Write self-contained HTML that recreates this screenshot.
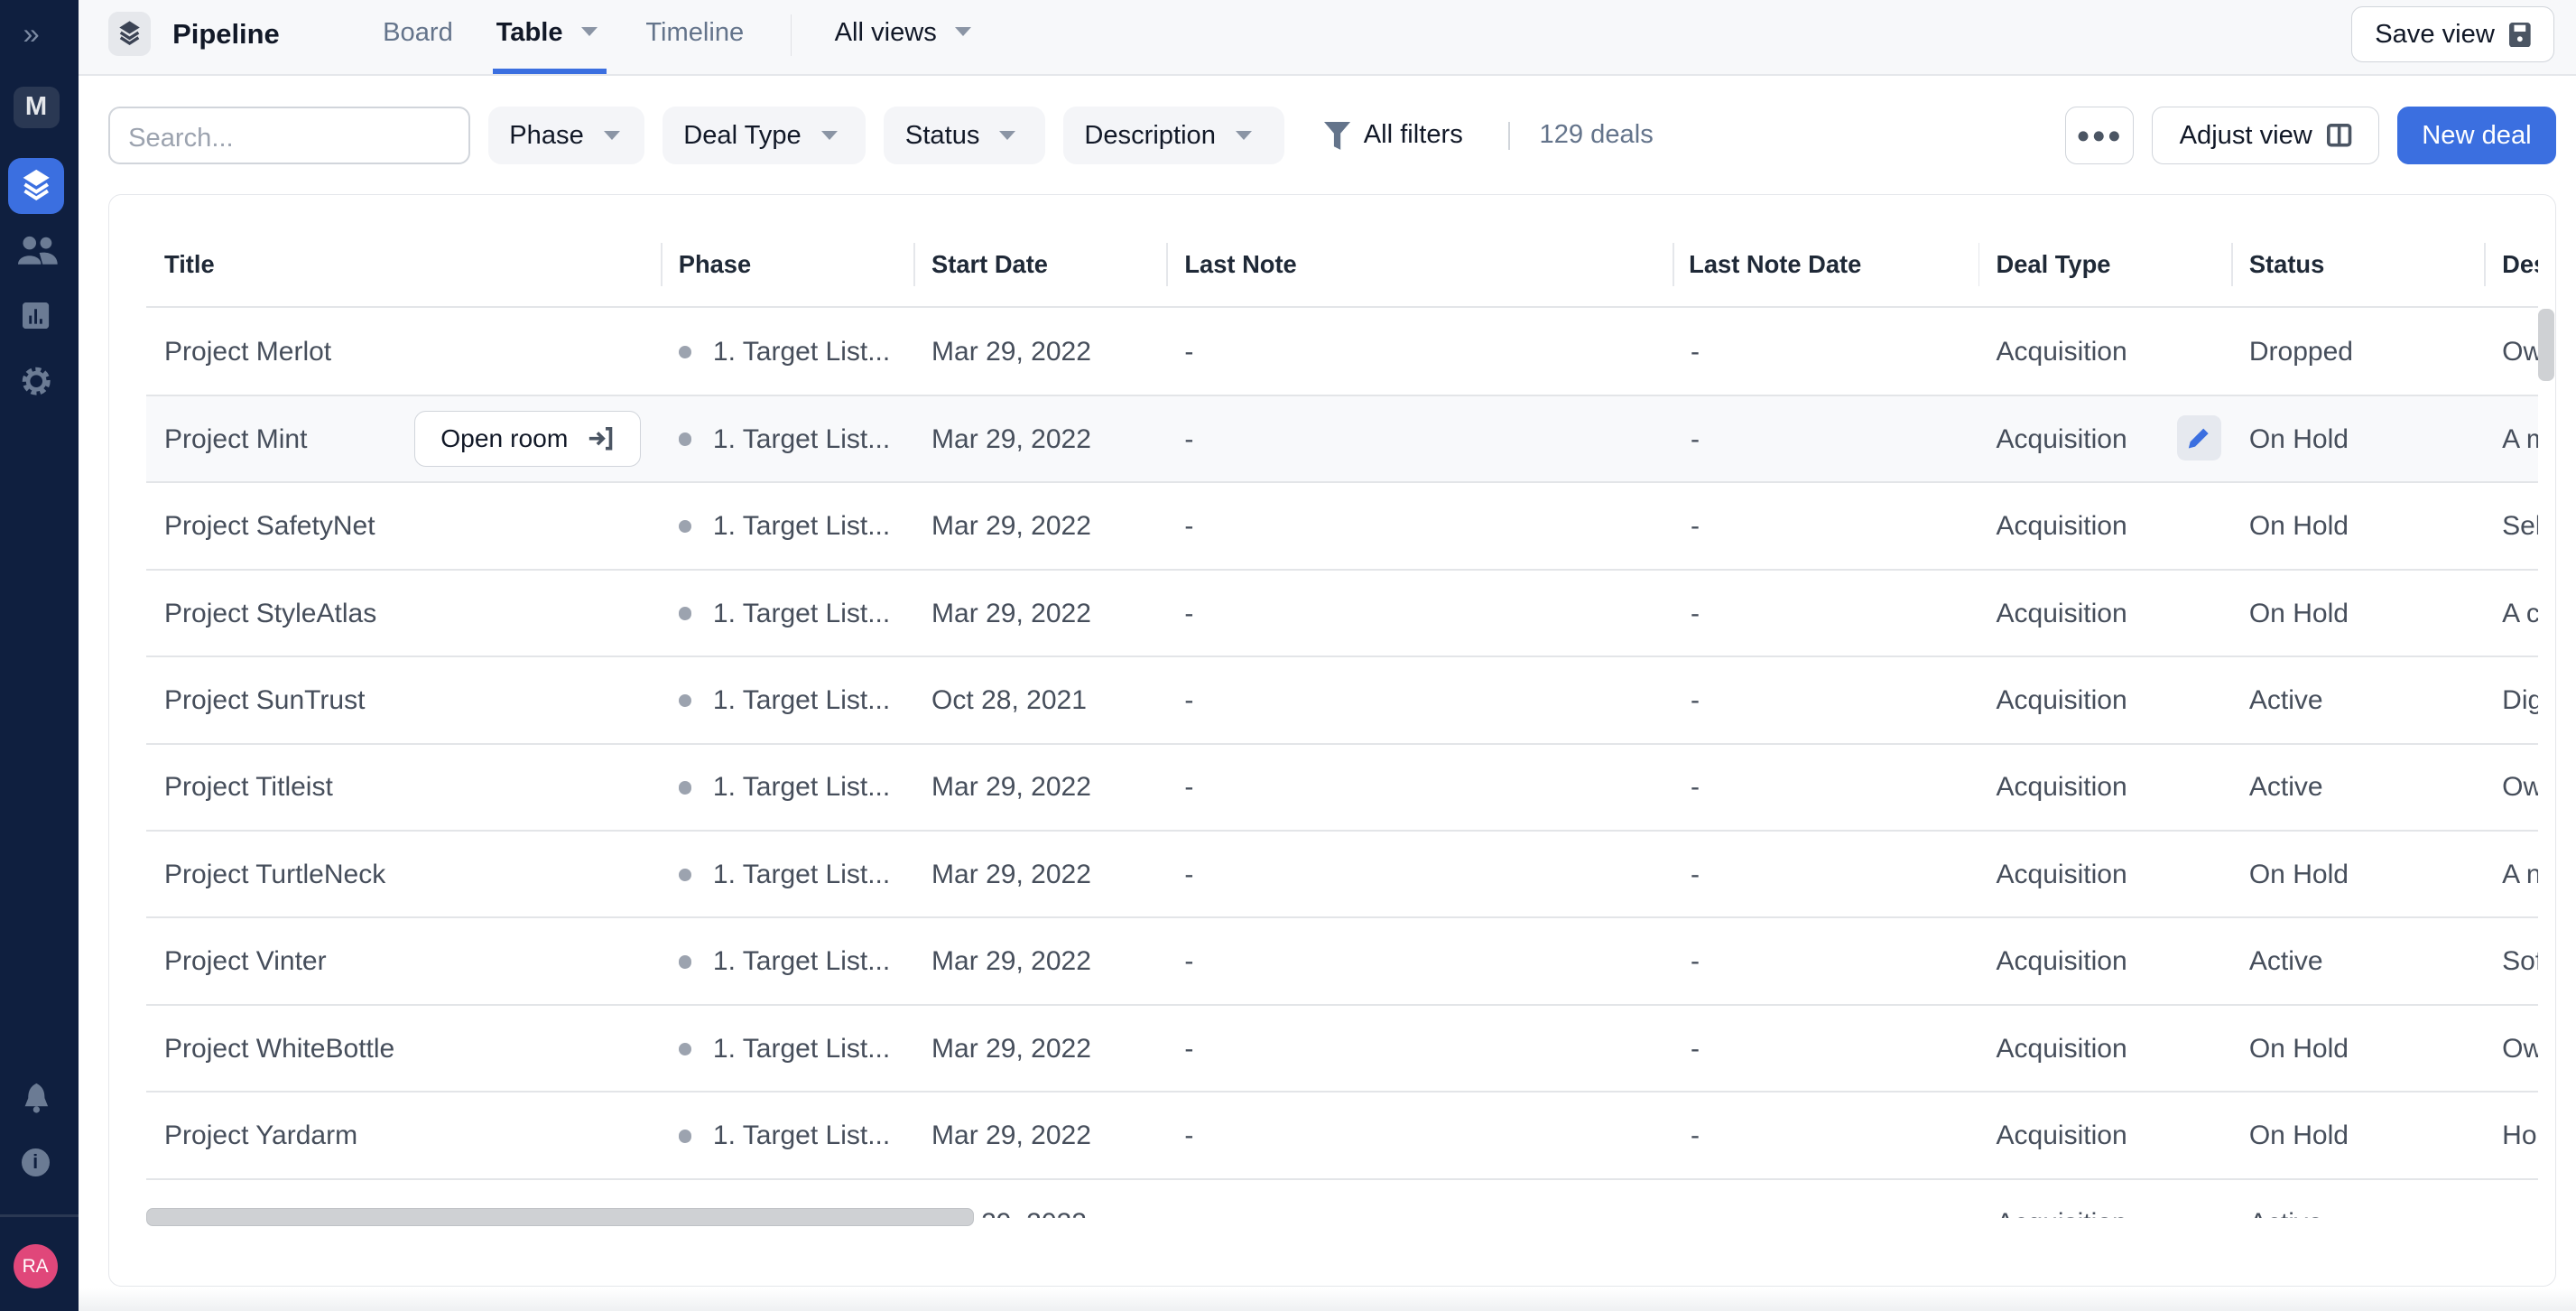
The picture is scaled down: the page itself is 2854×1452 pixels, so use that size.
<!DOCTYPE html>
<html><head><meta charset="utf-8"><style>
*{box-sizing:border-box;margin:0;padding:0}
html,body{width:2854px;height:1452px;overflow:hidden;background:#fff}
#root{zoom:1.8202;width:1568px;height:798px;position:relative;font-family:"Liberation Sans",sans-serif;color:#111827;overflow:hidden;background:#fff}
.abs{position:absolute}
.side{left:0;top:0;width:48px;height:798px;background:#0f1f3f}
.hdr{left:48px;top:0;right:0;height:46px;background:#f7f8fa;border-bottom:1.5px solid #e5e7eb}
.tab{top:11px;font-size:16px;color:#64748b}
.btn{border:1px solid #d1d5db;border-radius:7px;background:#fff;font-size:16px;display:flex;align-items:center;justify-content:center;color:#111827}
.chip{top:65px;height:35px;background:#f4f5f8;border-radius:8px;font-size:16px;display:flex;align-items:center;padding-left:13px;color:#111827}
.tri{display:inline-block;width:0;height:0;border-left:5px solid transparent;border-right:5px solid transparent;border-top:6px solid #8b95a5;margin-left:12px}
.card{left:66px;top:118px;width:1490px;height:665px;border:1px solid #e5e7eb;border-radius:8px;background:#fff;overflow:hidden}
.th{top:152px;font-size:15px;font-weight:bold;color:#1f2937}
.vd{top:148px;width:1px;height:26px;background:#e5e7eb}
.row{left:89px;width:1456px;height:53px;border-bottom:1.5px solid #e3e5e8}
.c{position:absolute;top:17px;font-size:16.5px;color:#464e5b;white-space:nowrap}
.dot{display:inline-block;width:8px;height:8px;border-radius:50%;background:#9ca3af;margin-right:13px;vertical-align:1px}
</style></head><body><div id="root">
<div class="abs side">
 <div class="abs" style="left:14px;top:10px;color:#7b8aa3;font-size:18px">»</div>
 <div class="abs" style="left:8px;top:53px;width:28px;height:25px;background:#2a3853;border-radius:6px;color:#e5e7eb;font-weight:bold;font-size:16px;text-align:center;line-height:25px">M</div>
 <div class="abs" style="left:5px;top:96px;width:34px;height:34px;background:#3b6fe0;border-radius:8px"></div>
 <svg class="abs" style="left:12px;top:102px" width="20" height="22" viewBox="0 0 20 22"><path d="M10 1L18 6L10 11L2 6Z" fill="#fff"/><path d="M3 10L10 14.5L17 10" stroke="#fff" stroke-width="2.2" fill="none"/><path d="M3 14L10 18.5L17 14" stroke="#fff" stroke-width="2.2" fill="none"/></svg>
 <svg class="abs" style="left:11px;top:143px" width="24" height="18" viewBox="0 0 24 18"><circle cx="7" cy="5" r="4" fill="#6b7b94"/><circle cx="17" cy="5" r="3.5" fill="#6b7b94"/><path d="M0 18C0 11 14 11 14 18Z" fill="#6b7b94"/><path d="M13 11C18 10 24 12 24 18H15Z" fill="#6b7b94"/></svg>
 <svg class="abs" style="left:14px;top:184px" width="16" height="16" viewBox="0 0 16 16"><rect width="16" height="16" rx="2" fill="#6b7b94"/><rect x="4" y="8" width="1.6" height="5" fill="#0f1f3f"/><rect x="7.2" y="4" width="1.6" height="9" fill="#0f1f3f"/><rect x="10.4" y="10" width="1.6" height="3" fill="#0f1f3f"/></svg>
 <svg class="abs" style="left:12px;top:222px" width="20" height="20" viewBox="0 0 20 20"><circle cx="10" cy="10" r="6.5" fill="none" stroke="#6b7b94" stroke-width="4" stroke-dasharray="3 2"/><circle cx="10" cy="10" r="5" fill="none" stroke="#6b7b94" stroke-width="2.5"/></svg>
 <svg class="abs" style="left:13px;top:658px" width="18" height="20" viewBox="0 0 18 20"><path d="M9 1C5 3 4 6 4 10L2 15H16L14 10C14 6 13 3 9 1Z" fill="#6b7b94"/><circle cx="9" cy="17" r="2" fill="#6b7b94"/></svg>
 <div class="abs" style="left:13px;top:699px;width:17px;height:17px;border-radius:50%;background:#6b7b94;color:#0f1f3f;font-size:12px;font-weight:bold;text-align:center;line-height:17px">i</div>
 <div class="abs" style="left:0;top:739px;width:48px;height:1.5px;background:#2a3853"></div>
 <div class="abs" style="left:8px;top:757px;width:27px;height:27px;border-radius:50%;background:#e0477a;color:#fff;font-size:11.5px;text-align:center;line-height:27px">RA</div>
</div>
<div class="abs hdr">
 <div class="abs" style="left:18px;top:7px;width:26px;height:27px;background:#e6e8ec;border-radius:6px"></div>
 <svg class="abs" style="left:23px;top:12px" width="16" height="17" viewBox="0 0 20 22"><path d="M10 1L18 6L10 11L2 6Z" fill="#3b4354"/><path d="M3 10L10 14.5L17 10" stroke="#3b4354" stroke-width="2.4" fill="none"/><path d="M3 14L10 18.5L17 14" stroke="#3b4354" stroke-width="2.4" fill="none"/></svg>
 <div class="abs" style="left:57px;top:11px;font-size:17px;font-weight:bold;color:#111827">Pipeline</div>
 <div class="abs tab" style="left:185px">Board</div>
 <div class="abs tab" style="left:254px;color:#111827;font-weight:bold">Table<span class="tri" style="margin-left:11px;vertical-align:3px"></span></div>
 <div class="abs" style="left:252px;top:42px;width:69px;height:3px;background:#3b6fe0"></div>
 <div class="abs tab" style="left:345px">Timeline</div>
 <div class="abs" style="left:433px;top:9px;width:1px;height:25px;background:#e0e2e6"></div>
 <div class="abs tab" style="left:460px;color:#111827">All views<span class="tri" style="margin-left:11px;vertical-align:3px"></span></div>
 <div class="abs btn" style="left:1383px;top:4px;width:124px;height:34px">Save view
  <svg style="margin-left:9px" width="13" height="15" viewBox="0 0 13 15"><rect x="0" y="0" width="13" height="15" rx="2" fill="#4b5563"/><rect x="3" y="1.5" width="7" height="4" fill="#fff"/><circle cx="6.5" cy="10" r="1.6" fill="#fff"/></svg></div>
</div>
<div class="abs" style="left:66px;top:65px;width:220px;height:35px;border:1.5px solid #d1d5db;border-radius:7px;font-size:16px;color:#9ca3af;padding:9px 11px">Search...</div>
<div class="abs chip" style="left:297px;width:95px">Phase<span class="tri"></span></div>
<div class="abs chip" style="left:403px;width:124px">Deal Type<span class="tri"></span></div>
<div class="abs chip" style="left:538px;width:98px">Status<span class="tri"></span></div>
<div class="abs chip" style="left:647px;width:135px">Description<span class="tri"></span></div>
<svg class="abs" style="left:806px;top:74px" width="16" height="17" viewBox="0 0 16 17"><path d="M0 0H16L10 7V17L6 15V7Z" fill="#64748b"/></svg>
<div class="abs" style="left:830px;top:73px;font-size:16px">All filters</div>
<div class="abs" style="left:918px;top:74px;width:1px;height:17px;background:#d1d5db"></div>
<div class="abs" style="left:937px;top:73px;font-size:16px;color:#64748b">129 deals</div>
<div class="abs btn" style="left:1257px;top:65px;width:42px;height:35px;color:#4b5563;font-size:14px;letter-spacing:1px">●●●</div>
<div class="abs btn" style="left:1310px;top:65px;width:138px;height:35px">Adjust view
 <svg style="margin-left:9px" width="15" height="14" viewBox="0 0 15 14"><rect x="1" y="1" width="13" height="12" rx="1.5" fill="none" stroke="#4b5563" stroke-width="2"/><path d="M7.5 1V13" stroke="#4b5563" stroke-width="2"/></svg></div>
<div class="abs btn" style="left:1459px;top:65px;width:97px;height:35px;background:#3b6fe0;border-color:#3b6fe0;color:#fff">New deal</div>
<div class="abs card"></div>
<div class="abs th" style="left:100px">Title</div>
<div class="abs vd" style="left:402px"></div><div class="abs th" style="left:413px">Phase</div>
<div class="abs vd" style="left:556px"></div><div class="abs th" style="left:567px">Start Date</div>
<div class="abs vd" style="left:710px"></div><div class="abs th" style="left:721px">Last Note</div>
<div class="abs vd" style="left:1018px"></div><div class="abs th" style="left:1028px">Last Note Date</div>
<div class="abs vd" style="left:1204px"></div><div class="abs th" style="left:1215px">Deal Type</div>
<div class="abs vd" style="left:1358px"></div><div class="abs th" style="left:1369px">Status</div>
<div class="abs vd" style="left:1512px"></div><div class="abs th" style="left:1523px;width:22px;overflow:hidden">Desc</div>
<div class="abs" style="left:89px;top:186px;width:1456px;height:1.5px;background:#e3e5e8"></div>
<div class="abs" style="left:89px;top:188px;width:1456px;height:553px;overflow:hidden">
<div style="position:relative;left:-89px;top:-188px">
<div class="abs row" style="top:188px"><span class="c" style="left:11px">Project Merlot</span><span class="c" style="left:324px"><i class="dot"></i>1. Target List...</span><span class="c" style="left:478px">Mar 29, 2022</span><span class="c" style="left:632px">-</span><span class="c" style="left:940px">-</span><span class="c" style="left:1126px">Acquisition</span><span class="c" style="left:1280px">Dropped</span><span class="c" style="left:1434px">Owner</span></div>
<div class="abs row" style="top:241px;background:#f8f9fb"><span class="c" style="left:11px">Project Mint</span><span class="c" style="left:324px"><i class="dot"></i>1. Target List...</span><span class="c" style="left:478px">Mar 29, 2022</span><span class="c" style="left:632px">-</span><span class="c" style="left:940px">-</span><span class="c" style="left:1126px">Acquisition</span><span class="c" style="left:1280px">On Hold</span><span class="c" style="left:1434px">A m</span>
 <div class="abs btn" style="left:163px;top:9px;width:138px;height:34px;font-size:15.5px">Open room<svg style="margin-left:12px" width="16" height="14" viewBox="0 0 16 14"><path d="M1 7H9M6 3.5L9.5 7L6 10.5" stroke="#4b5563" stroke-width="2" fill="none"/><path d="M11 1H14V13H11" stroke="#4b5563" stroke-width="2" fill="none"/></svg></div>
 <div class="abs" style="left:1236px;top:12px;width:27px;height:27px;background:#e6e9ef;border-radius:5px"></div>
 <svg class="abs" style="left:1242px;top:18px" width="15" height="15" viewBox="0 0 15 15"><path d="M1 14L2 10L10 2L13 5L5 13Z" fill="#3b6fe0"/></svg>
</div>
<div class="abs row" style="top:294px"><span class="c" style="left:11px">Project SafetyNet</span><span class="c" style="left:324px"><i class="dot"></i>1. Target List...</span><span class="c" style="left:478px">Mar 29, 2022</span><span class="c" style="left:632px">-</span><span class="c" style="left:940px">-</span><span class="c" style="left:1126px">Acquisition</span><span class="c" style="left:1280px">On Hold</span><span class="c" style="left:1434px">Sel</span></div>
<div class="abs row" style="top:347px"><span class="c" style="left:11px">Project StyleAtlas</span><span class="c" style="left:324px"><i class="dot"></i>1. Target List...</span><span class="c" style="left:478px">Mar 29, 2022</span><span class="c" style="left:632px">-</span><span class="c" style="left:940px">-</span><span class="c" style="left:1126px">Acquisition</span><span class="c" style="left:1280px">On Hold</span><span class="c" style="left:1434px">A c</span></div>
<div class="abs row" style="top:400px"><span class="c" style="left:11px">Project SunTrust</span><span class="c" style="left:324px"><i class="dot"></i>1. Target List...</span><span class="c" style="left:478px">Oct 28, 2021</span><span class="c" style="left:632px">-</span><span class="c" style="left:940px">-</span><span class="c" style="left:1126px">Acquisition</span><span class="c" style="left:1280px">Active</span><span class="c" style="left:1434px">Dig</span></div>
<div class="abs row" style="top:453px"><span class="c" style="left:11px">Project Titleist</span><span class="c" style="left:324px"><i class="dot"></i>1. Target List...</span><span class="c" style="left:478px">Mar 29, 2022</span><span class="c" style="left:632px">-</span><span class="c" style="left:940px">-</span><span class="c" style="left:1126px">Acquisition</span><span class="c" style="left:1280px">Active</span><span class="c" style="left:1434px">Ow</span></div>
<div class="abs row" style="top:506px"><span class="c" style="left:11px">Project TurtleNeck</span><span class="c" style="left:324px"><i class="dot"></i>1. Target List...</span><span class="c" style="left:478px">Mar 29, 2022</span><span class="c" style="left:632px">-</span><span class="c" style="left:940px">-</span><span class="c" style="left:1126px">Acquisition</span><span class="c" style="left:1280px">On Hold</span><span class="c" style="left:1434px">A n</span></div>
<div class="abs row" style="top:559px"><span class="c" style="left:11px">Project Vinter</span><span class="c" style="left:324px"><i class="dot"></i>1. Target List...</span><span class="c" style="left:478px">Mar 29, 2022</span><span class="c" style="left:632px">-</span><span class="c" style="left:940px">-</span><span class="c" style="left:1126px">Acquisition</span><span class="c" style="left:1280px">Active</span><span class="c" style="left:1434px">Sof</span></div>
<div class="abs row" style="top:612px"><span class="c" style="left:11px">Project WhiteBottle</span><span class="c" style="left:324px"><i class="dot"></i>1. Target List...</span><span class="c" style="left:478px">Mar 29, 2022</span><span class="c" style="left:632px">-</span><span class="c" style="left:940px">-</span><span class="c" style="left:1126px">Acquisition</span><span class="c" style="left:1280px">On Hold</span><span class="c" style="left:1434px">Ow</span></div>
<div class="abs row" style="top:665px"><span class="c" style="left:11px">Project Yardarm</span><span class="c" style="left:324px"><i class="dot"></i>1. Target List...</span><span class="c" style="left:478px">Mar 29, 2022</span><span class="c" style="left:632px">-</span><span class="c" style="left:940px">-</span><span class="c" style="left:1126px">Acquisition</span><span class="c" style="left:1280px">On Hold</span><span class="c" style="left:1434px">Ho</span></div>
<div class="abs row" style="top:718px"><span class="c" style="left:11px">Seashells Inc</span><span class="c" style="left:324px"><i class="dot"></i>1. Target List...</span><span class="c" style="left:478px">Apr 29, 2022</span><span class="c" style="left:1126px">Acquisition</span><span class="c" style="left:1280px">Active</span></div>
</div></div>
<div class="abs" style="left:89px;top:735px;width:504px;height:11px;background:#cfd1d4;border-radius:4px;border:1px solid #bfc2c6"></div>
<div class="abs" style="left:1545px;top:188px;width:10px;height:44px;background:#cfd1d4;border-radius:4px"></div>
<div class="abs" style="left:48px;top:784px;width:1520px;height:14px;background:linear-gradient(#fff,#eef0f2)"></div>
</div></body></html>
